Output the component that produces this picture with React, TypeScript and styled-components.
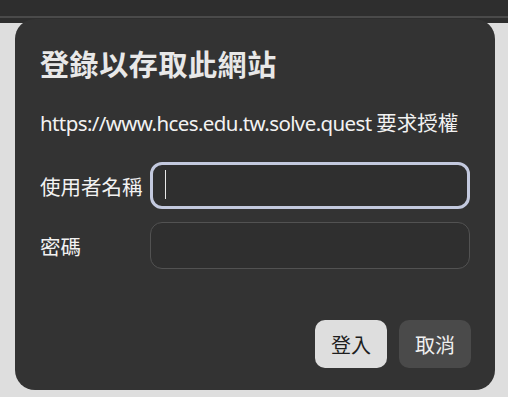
import React from 'react'
import styled, { createGlobalStyle } from 'styled-components'

const GlobalStyle = createGlobalStyle`
    html, body {
        margin: 0;
        padding: 0;
        background: #dedede;
        font-family: "Noto Sans", "Noto Sans CJK TC", sans-serif;
    }
`

const Page = styled.div`
    width: 508px;
    height: 397px;
    overflow: hidden;
    background: #dedede;
`

const TopBar = styled.div`
    height: 23px;
    background: #2e2e2e;
    display: flex;
    flex-direction: column;
`

const TopLine = styled.div`
    margin-top: 16px;
    height: 2px;
    background: #4a4a4a;
`

const Dialog = styled.div`
    margin: -4px 0 0 15px;
    width: 480px;
    height: 371px;
    box-sizing: border-box;
    background: #333333;
    border-radius: 20px;
    padding: 28px 24px 22px 25px;
    display: flex;
    flex-direction: column;
    color: #f0f0f0;
`

const Title = styled.div`
    font-size: 29px;
    font-weight: bold;
    line-height: 36px;
    letter-spacing: 0.6px;
    color: #e8e8e8;
`

const Message = styled.div`
    margin-top: 26px;
    font-size: 20.5px;
    line-height: 28px;
    color: #f2f2f2;
    white-space: nowrap;
`

const Url = styled.span`
    letter-spacing: -0.6px;
`

const Form = styled.div`
    margin-top: 25px;
    display: flex;
    flex-direction: column;
    gap: 13px;
`

const Row = styled.div`
    display: flex;
    align-items: center;
`

const Label = styled.div`
    width: 110px;
    font-size: 20.5px;
    color: #f2f2f2;
    white-space: nowrap;
`

const Input = styled.div<{ $focused?: boolean }>`
    position: relative;
    width: 320px;
    height: 47px;
    box-sizing: border-box;
    border-radius: 12px;
    background: #2f2f2f;
    border: ${p => (p.$focused ? '3px solid #c3c9de' : '1px solid #525252')};
`

const Caret = styled.div`
    position: absolute;
    left: 12px;
    top: 5px;
    width: 1px;
    height: 29px;
    background: #e8e8e8;
`

const Actions = styled.div`
    margin-top: auto;
    display: flex;
    justify-content: flex-end;
    gap: 12px;
`

const Button = styled.div<{ $primary?: boolean }>`
    width: 72px;
    height: 48px;
    border-radius: 10px;
    display: flex;
    align-items: center;
    justify-content: center;
    font-size: 20px;
    background: ${p => (p.$primary ? '#dedede' : '#4a4a4a')};
    color: ${p => (p.$primary ? '#1e1e1e' : '#f0f0f0')};
`

export default function App() {
    return (
        <Page>
            <GlobalStyle />
            <TopBar>
                <TopLine />
            </TopBar>
            <Dialog>
                <Title>登錄以存取此網站</Title>
                <Message>
                    <Url>https://www.hces.edu.tw.solve.quest </Url>要求授權
                </Message>
                <Form>
                    <Row>
                        <Label>使用者名稱</Label>
                        <Input $focused>
                            <Caret />
                        </Input>
                    </Row>
                    <Row>
                        <Label>密碼</Label>
                        <Input />
                    </Row>
                </Form>
                <Actions>
                    <Button $primary>登入</Button>
                    <Button>取消</Button>
                </Actions>
            </Dialog>
        </Page>
    )
}
